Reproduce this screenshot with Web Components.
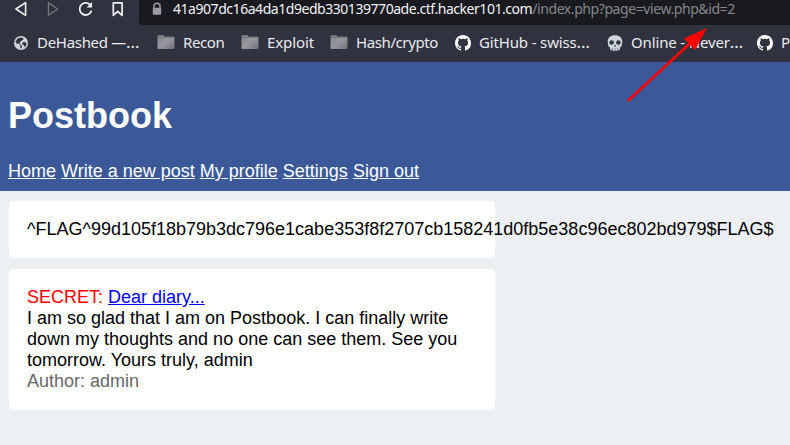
<!DOCTYPE html>
<html lang="en"><head><meta charset="utf-8"><title>Postbook</title>
<style>body{margin:0;width:790px;height:445px;overflow:hidden;background:#eceff4;font:18px/21px "Liberation Sans",Arial,sans-serif}</style></head>
<body><browser-page></browser-page>
<script>
const define=(name,html)=>customElements.define(name,class extends HTMLElement{
  constructor(){super();this.attachShadow({mode:'open'}).innerHTML=html;}
});

const icons={
  back:['14','<path d="M10.6.6v12.8L.9 7Z" fill="none" stroke="#f1f1f4" stroke-width="1.6" stroke-linejoin="round"/>'],
  forward:['14','<path d="M1.4.8v12.4L10.6 7Z" fill="none" stroke="#767781" stroke-width="1.3" stroke-linejoin="round"/>'],
  reload:['14','<path d="M10.9 2.7A6 6 0 1 0 12.2 9.3" fill="none" stroke="#f1f1f4" stroke-width="1.8" stroke-linecap="round"/><path d="M13 0v5.6H7.6Z" fill="#f1f1f4"/>'],
  mark:['14','<path d="M2.3.8h8.8v12.6L6.7 9.4l-4.4 4Z" fill="none" stroke="#f1f1f4" stroke-width="1.7" stroke-linejoin="round"/>'],
  lock:['14','<path d="M4 6.5V4.3a3 3 0 0 1 6 0v2.2" fill="none" stroke="#9c9da4" stroke-width="1.5"/><rect x="2.8" y="5.8" width="8.4" height="7" rx="1" fill="#9c9da4"/>'],
  globe:['14','<circle cx="7" cy="7" r="7" fill="#d2d3d6"/><path d="M7.2 1.5 3.9 2.3 1.5 5.5l1 2 2.3.3 1.6 1.3-.3 1.7.7 1.8.9-.7.2-1.7L6.8 8.5 5.2 7l1.5-1.2.9-1.4 2-.8-.5-1.3ZM8.3 6.6l2.4-.5 1.8 1.1-.6 2.5-1.4 1.4-.7-2.2-1.8-.7Z" fill="#30323f"/>'],
  github:['16','<path fill="#fff" fill-rule="evenodd" d="M8 0C3.58 0 0 3.58 0 8c0 3.54 2.29 6.53 5.47 7.59.4.07.55-.17.55-.38 0-.19-.01-.82-.01-1.49-2.01.37-2.53-.49-2.69-.94-.09-.23-.48-.94-.82-1.13-.28-.15-.68-.52-.01-.53.63-.01 1.08.58 1.23.82.72 1.21 1.87.87 2.33.66.07-.52.28-.87.51-1.07-1.78-.2-3.64-.89-3.64-3.95 0-.87.31-1.59.82-2.15-.08-.2-.36-1.02.08-2.12 0 0 .67-.21 2.2.82A7.6 7.6 0 0 1 8 3.86c.68 0 1.36.09 2 .27 1.53-1.04 2.2-.82 2.2-.82.44 1.1.16 1.92.08 2.12.51.56.82 1.27.82 2.15 0 3.07-1.87 3.75-3.65 3.95.29.25.54.73.54 1.48 0 1.07-.01 1.93-.01 2.2 0 .21.15.46.55.38A8.01 8.01 0 0 0 16 8c0-4.42-3.58-8-8-8Z"/>'],
  skull:['16','<path fill="#ccd5db" d="M8 .2C3.5.2.7 2.7.7 6.6c0 1.5.4 2.5.5 3.5.1 1.3.3 1.9 1.7 2.1l.3 2.6c1 .8 2.8 1.1 4.8 1.1s3.8-.3 4.8-1.1l.3-2.6c1.4-.2 1.6-.8 1.7-2.1.1-1 .5-2 .5-3.5C15.3 2.7 12.5.2 8 .2Z"/><ellipse cx="4.6" cy="7.5" rx="2.3" ry="2.2" fill="#30323f"/><ellipse cx="11.4" cy="7.5" rx="2.3" ry="2.2" fill="#30323f"/><path d="m8 9.5-1.2 2h2.4Z" fill="#30323f"/><path d="M5.3 13v2.8M8 13.4v2.5M10.7 13v2.8" stroke="#596571" stroke-width=".8"/>'],
  folder:['18','<defs><linearGradient id="g" x2="1" y2="1"><stop stop-color="#85868a"/><stop offset=".5" stop-color="#97989e"/><stop offset="1" stop-color="#707178"/></linearGradient></defs><path d="M.5 3V2.4Q.5 1.3 1.6 1.3h4.6q.9 0 .9 1.4h9.2q1.2 0 1.2 1.1v10.1q0 1.1-1.2 1.1H1.6q-1.1 0-1.1-1.1Z" fill="url(#g)"/><path d="M.8 3.2h16" stroke="#66676d" stroke-width=".8"/>']
};
customElements.define('ui-icon',class extends HTMLElement{
  constructor(){super();this.attachShadow({mode:'open'});}
  connectedCallback(){const [s,p]=icons[this.getAttribute('name')];
    this.shadowRoot.innerHTML=`<style>:host{display:block;flex:none;width:${s}px;height:${s}px}svg{display:block;overflow:visible}</style><svg width="${s}" height="${s}" viewBox="0 0 ${s} ${s}">${p}</svg>`;}
});
define('address-bar',`<style>:host{display:flex;align-items:center;box-sizing:border-box;height:25px;flex:1;background:#181a20;border-radius:0 0 0 4px;padding:0 0 7px 11px;color:#f2f2f5;font:14px/18px "Noto Sans",sans-serif;letter-spacing:-.455px;white-space:nowrap}ui-icon{margin-right:9px}</style><ui-icon name="lock"></ui-icon><slot></slot>`);
define('tool-bar',`<style>:host{display:flex;height:25px}nav{display:flex;width:139px;box-sizing:border-box;padding:2px 0 0 15px;gap:18px}address-bar span{color:#85868c;letter-spacing:-.42px}</style><nav><ui-icon name="back"></ui-icon><ui-icon name="forward"></ui-icon><ui-icon name="reload"></ui-icon><ui-icon name="mark"></ui-icon></nav><address-bar>41a907dc16a4da1d9edb330139770ade.ctf.hacker101.com<span>/index.php?page=view.php&amp;id=2</span></address-bar>`);
define('book-mark',`<style>:host{display:flex;align-items:center;box-sizing:border-box;flex:none;width:var(--w);gap:var(--g,8px);white-space:nowrap}span{margin-top:-2px;letter-spacing:var(--ls)}</style><slot name="icon"></slot><span><slot></slot></span>`);
const mark=(icon,text,w,g,ls)=>`<book-mark style="--w:${w}px;--g:${g}px;--ls:${ls}px"><ui-icon slot="icon" name="${icon}"></ui-icon>${text.replace('…','<span class="dots">…</span>')}</book-mark>`;
define('bookmark-bar',`<style>:host{display:flex;height:36px;padding-left:14px;overflow:hidden;color:#ebebef;font:15px/22px "Noto Sans",sans-serif;box-sizing:border-box}.dots{font-size:17px;line-height:1;letter-spacing:0}</style>`+
  mark('globe','DeHashed —…',143,9,-.3)+mark('folder','Recon',84,8,-.4)+mark('folder','Exploit',89,8,-.1)+mark('folder','Hash/crypto',125,8,-.4)+mark('github','GitHub - swiss…',152,8,-.15)+mark('skull','Online - Never…',150,8,-.15)+mark('github','P',33,8,0));
define('site-header',`<style>:host{display:block;height:129px;background:#3b5998;color:white;padding:33px 8px 0;box-sizing:border-box}h1{margin:0 0 24px;font:bold 36px/42px "Liberation Sans",Arial,sans-serif}a{color:white}</style><h1>Postbook</h1><nav><a href="#">Home</a> <a href="#">Write a new post</a> <a href="#">My profile</a> <a href="#">Settings</a> <a href="#">Sign out</a></nav>`);
define('post-card',`<style>:host{display:block;width:486px;box-sizing:border-box;padding:18px;background:#fff;border-radius:4px}</style><slot></slot>`);
define('pointer-arrow',`<style>:host{position:absolute;left:620px;top:20px;width:100px;height:90px}svg{display:block}</style><svg width="100" height="90"><path d="M8.5 80.3 72 21.5" stroke="#f00" stroke-width="2.8" stroke-linecap="round"/><path d="M87 8 63.7 18.6 75 30.2Z" fill="#f00"/></svg>`);
define('browser-page',`<style>:host{display:block;position:relative}.chrome{background:#30323f;height:62px}main{display:grid;gap:11px;padding:10px 9px}.secret{color:red}.author{color:#666}a{color:#00e}</style>
<div class="chrome"><tool-bar></tool-bar><bookmark-bar></bookmark-bar></div><site-header></site-header>
<main><post-card>^FLAG^99d105f18b79b3dc796e1cabe353f8f2707cb158241d0fb5e38c96ec802bd979$FLAG$</post-card><post-card><span class="secret">SECRET:</span> <a href="#">Dear diary...</a><div>I am so glad that I am on Postbook. I can finally write down my thoughts and no one can see them. See you tomorrow. Yours truly, admin</div><div class="author">Author: admin</div></post-card></main><pointer-arrow></pointer-arrow>`);
</script></body></html>
